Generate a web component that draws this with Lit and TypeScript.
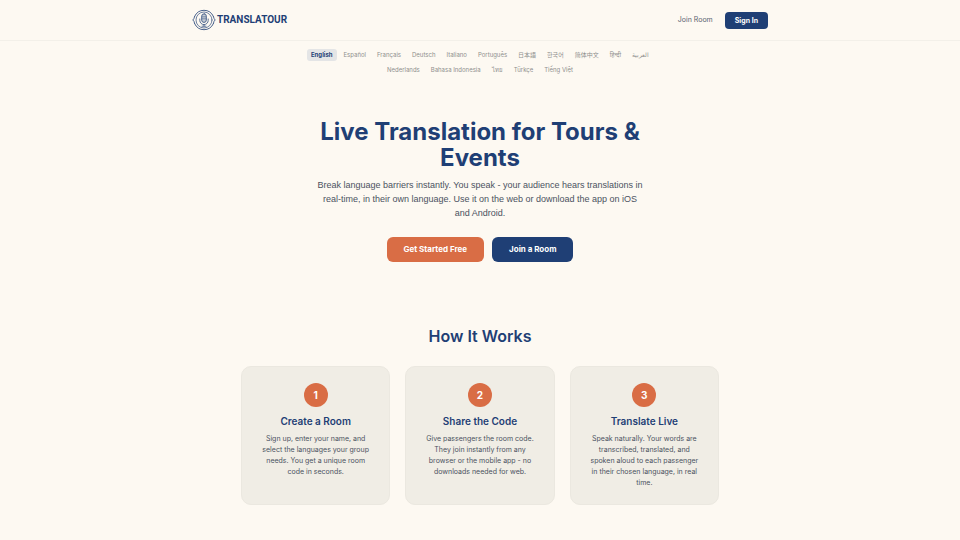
import { LitElement, html, css, svg } from "lit";
import { customElement, property } from "lit/decorators.js";
import { classMap } from "lit/directives/class-map.js";

interface Language {
  code: string;
  label: string;
}

interface Step {
  title: string;
  text: string;
}

const LANGUAGES: Language[] = [
  { code: "en", label: "English" },
  { code: "es", label: "Español" },
  { code: "fr", label: "Français" },
  { code: "de", label: "Deutsch" },
  { code: "it", label: "Italiano" },
  { code: "pt", label: "Português" },
  { code: "ja", label: "日本語" },
  { code: "ko", label: "한국어" },
  { code: "zh", label: "简体中文" },
  { code: "hi", label: "हिन्दी" },
  { code: "ar", label: "العربية" },
  { code: "nl", label: "Nederlands" },
  { code: "id", label: "Bahasa Indonesia" },
  { code: "th", label: "ไทย" },
  { code: "tr", label: "Türkçe" },
  { code: "vi", label: "Tiếng Việt" },
];

const STEPS: Step[] = [
  {
    title: "Create a Room",
    text: "Sign up, enter your name, and select the languages your group needs. You get a unique room code in seconds.",
  },
  {
    title: "Share the Code",
    text: "Give passengers the room code. They join instantly from any browser or the mobile app - no downloads needed for web.",
  },
  {
    title: "Translate Live",
    text: "Speak naturally. Your words are transcribed, translated, and spoken aloud to each passenger in their chosen language, in real time.",
  },
];

// Microphone inside a double ring, with a small arrow on each side.
const emblem = svg`
  <g fill="none" stroke="currentColor" stroke-linecap="round" stroke-linejoin="round">
    <path d="M2.6 8.4A10.3 10.3 0 0 1 21.4 8.4M21.4 15.6A10.3 10.3 0 0 1 2.6 15.6" />
    <path d="M2.6 8.4L2 10.4L0.8 12L2 13.4L2.6 15.6M21.4 8.4L22 10.4L23.2 12L22 13.4L21.4 15.6" />
    <circle cx="12" cy="12" r="8" stroke-width="0.8" />
    <rect x="9.7" y="5.8" width="4.6" height="8.6" rx="2.3" fill="currentColor" fill-opacity="0.3" />
    <path d="M7.8 11v1.4a4.2 4.2 0 0 0 8.4 0v-1.4M12 16.6v1.6M10 18.2h4" stroke-width="0.9" />
    <path d="M10.4 8.8h3.2M10.4 10.8h3.2" stroke-width="0.6" />
  </g>`;

@customElement("site-header")
export class SiteHeader extends LitElement {
  static styles = css`
    :host {
      display: block;
      border-bottom: 1px solid #f3f0e9;
    }
    .bar {
      display: flex;
      align-items: center;
      justify-content: space-between;
      max-width: 576px;
      height: 40px;
      margin: 0 auto;
    }
    .brand,
    .nav {
      display: flex;
      align-items: center;
    }
    .brand {
      gap: 1px;
      color: #1f3f75;
      text-decoration: none;
    }
    .emblem {
      width: 24px;
      height: 24px;
      opacity: 0.8;
    }
    .name {
      font: 700 10px/16px Roboto, sans-serif;
    }
    .nav {
      gap: 12px;
    }
    .link {
      color: #5b6371;
      font-size: 7px;
      line-height: 16px;
      text-decoration: none;
    }
    .signin {
      padding: 0 10px;
      border: 0;
      border-radius: 4px;
      background: #1f3f75;
      color: #fff;
      font: inherit;
      font-size: 7px;
      font-weight: 700;
      line-height: 17px;
    }
  `;

  render() {
    return html`
      <header class="bar">
        <a class="brand" href="#">
          <svg class="emblem" viewBox="0 0 24 24" aria-hidden="true">${emblem}</svg>
          <span class="name">TRANSLATOUR</span>
        </a>
        <nav class="nav">
          <a class="link" href="#join">Join Room</a>
          <button class="signin" type="button">Sign In</button>
        </nav>
      </header>
    `;
  }
}

@customElement("language-picker")
export class LanguagePicker extends LitElement {
  @property() selected = "en";

  static styles = css`
    :host {
      display: block;
    }
    .list {
      display: flex;
      flex-wrap: wrap;
      justify-content: center;
      gap: 3px;
      max-width: 368px;
      margin: 0 auto;
    }
    .lang {
      padding: 0 4px;
      border: 0;
      border-radius: 3px;
      background: none;
      color: #8f8f8e;
      font: inherit;
      font-size: 6px;
      line-height: 12px;
    }
    .active {
      background: #e4e5e6;
      color: #1f3f75;
      font-weight: 700;
    }
  `;

  render() {
    return html`
      <div class="list">
        ${LANGUAGES.map(
          (l) => html`<button
            type="button"
            lang=${l.code}
            class=${classMap({ lang: true, active: l.code === this.selected })}
            @click=${() => (this.selected = l.code)}
          >${l.label}</button>`,
        )}
      </div>
    `;
  }
}

@customElement("step-card")
export class StepCard extends LitElement {
  @property({ type: Number }) number = 1;
  @property() heading = "";
  @property() text = "";

  static styles = css`
    :host {
      display: flex;
      flex-direction: column;
      align-items: center;
      box-sizing: border-box;
      padding: 16px;
      border: 1px solid #ebe8e0;
      border-radius: 10px;
      background: #f0ede5;
      text-align: center;
    }
    .number {
      width: 24px;
      border-radius: 50%;
      background: #d96d45;
      color: #fff;
      font-size: 10px;
      font-weight: 700;
      line-height: 24px;
    }
    .title {
      margin: 6px 0 4px;
      color: #1f3f75;
      font-size: 10px;
      font-weight: 600;
      line-height: 16px;
    }
    .text {
      margin: 0;
      color: #4b5261;
      font-size: 7px;
      line-height: 11px;
    }
  `;

  render() {
    return html`
      <span class="number">${this.number}</span>
      <h3 class="title">${this.heading}</h3>
      <p class="text">${this.text}</p>
    `;
  }
}

@customElement("app-root")
export class AppRoot extends LitElement {
  static styles = css`
    :host {
      display: block;
      min-height: 100vh;
      background: #fdf9f2;
      font-family: Inter, "Noto Sans", "Noto Sans CJK SC", sans-serif;
    }
    .languages {
      padding: 8px 0;
    }
    .hero {
      display: flex;
      flex-direction: column;
      align-items: center;
      padding: 35px 16px 64px;
      text-align: center;
    }
    .title {
      max-width: 352px;
      margin: 0;
      color: #1f3f75;
      font-size: 24px;
      font-weight: 700;
      line-height: 26px;
    }
    .lead {
      max-width: 330px;
      margin: 7px 0 17px;
      color: #4b5261;
      font-family: "Liberation Sans", Arial, sans-serif;
      font-size: 9px;
      line-height: 14px;
    }
    .actions {
      display: flex;
      gap: 8px;
    }
    .action {
      padding: 0 17px;
      border: 0;
      border-radius: 6px;
      background: #1f3f75;
      color: #fff;
      font: inherit;
      font-size: 8px;
      font-weight: 700;
      line-height: 25px;
    }
    .primary {
      background: #d96d45;
    }
    .how {
      max-width: 478px;
      margin: 0 auto;
      padding-bottom: 32px;
    }
    .subtitle {
      margin: 0 0 20px;
      color: #1f3f75;
      font-size: 16px;
      font-weight: 600;
      line-height: 20px;
      text-align: center;
    }
    .steps {
      display: grid;
      grid-template-columns: repeat(3, 1fr);
      gap: 15px;
    }
  `;

  render() {
    return html`
      <site-header></site-header>
      <main>
        <language-picker class="languages"></language-picker>
        <section class="hero">
          <h1 class="title">Live Translation for Tours &amp; Events</h1>
          <p class="lead">
            Break language barriers instantly. You speak - your audience hears translations in
            real-time, in their own language. Use it on the web or download the app on iOS and
            Android.
          </p>
          <div class="actions">
            <button class="action primary" type="button">Get Started Free</button>
            <button class="action" type="button">Join a Room</button>
          </div>
        </section>
        <section class="how">
          <h2 class="subtitle">How It Works</h2>
          <div class="steps">
            ${STEPS.map(
              (s, i) => html`<step-card .number=${i + 1} .heading=${s.title} .text=${s.text}></step-card>`,
            )}
          </div>
        </section>
      </main>
    `;
  }
}
